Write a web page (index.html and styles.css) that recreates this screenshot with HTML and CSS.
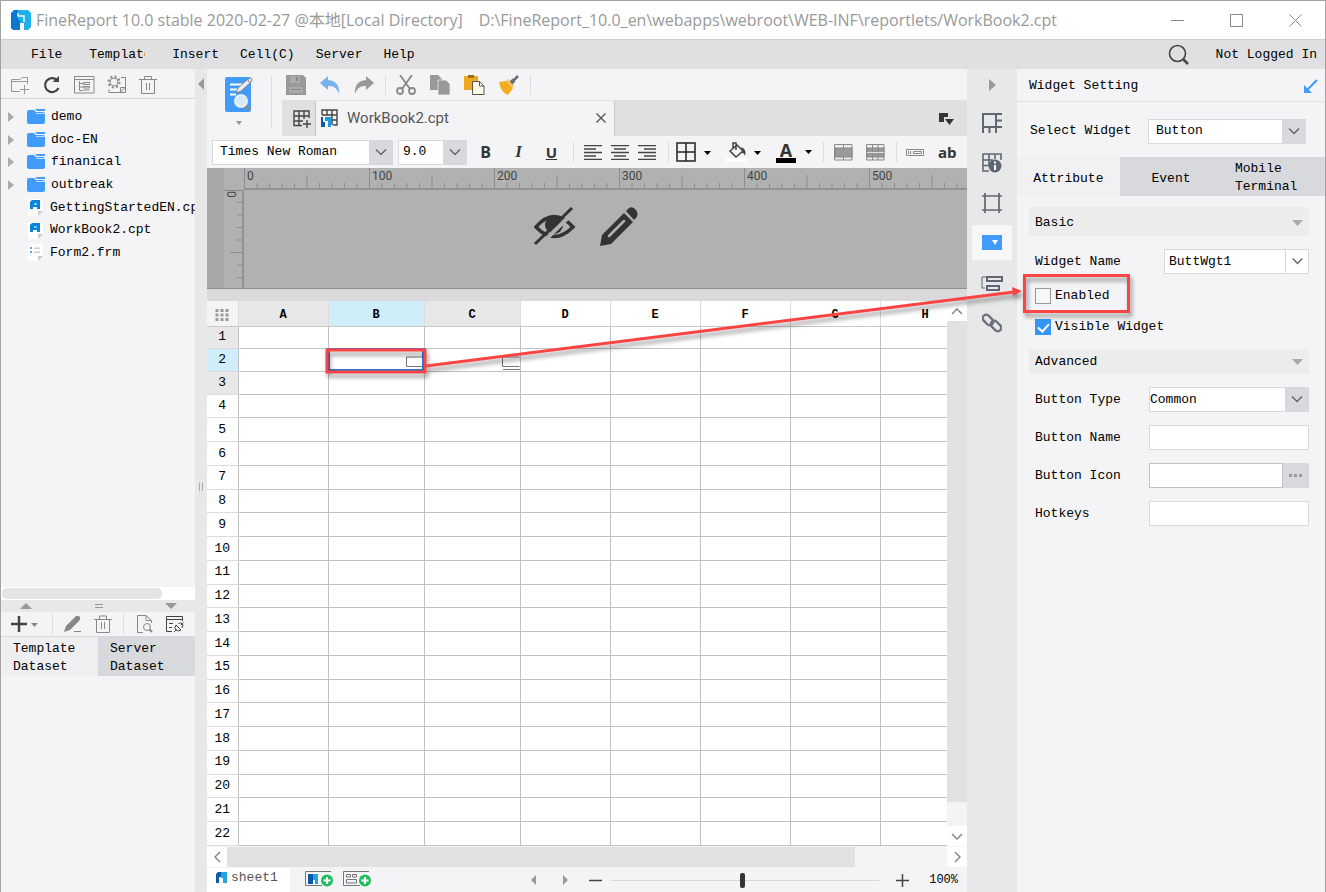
FILE: index.html
```html
<!DOCTYPE html>
<html lang="en">
<head>
<meta charset="utf-8">
<title>FineReport 10.0</title>
<link rel="stylesheet" href="styles.css">
</head>
<body>
<div class="window">
  <header class="titlebar">
    <svg class="logo" width="20" height="20" viewBox="0 0 20 20"><path d="M0 3L3 0H10V20H2L0 18Z" fill="#0a78d2"/><path d="M7 0H17L20 3V17L17 20H9V10H7Z" fill="#1fb0ea"/><path d="M7 3V6H13V12" fill="none" stroke="#e6f6fd" stroke-width="1.500"/><path d="M6 13H13V20H9V15H6Z" fill="#fff"/><path d="M2 13H9V20H2Z" fill="#0a78d2"/></svg>
    <span class="title">FineReport 10.0 stable 2020-02-27 @本地[Local Directory]</span>
    <span class="title path">D:\FineReport_10.0_en\webapps\webroot\WEB-INF\reportlets/WorkBook2.cpt</span>
    <div class="wincontrols">
      <button aria-label="Minimize"><svg width="13" height="13"><path d="M0 6.500H13" stroke="#888"/></svg></button>
      <button aria-label="Maximize"><svg width="13" height="13"><path d="M.5 .5H12.500V12.500H.5Z" fill="none" stroke="#888"/></svg></button>
      <button aria-label="Close"><svg width="13" height="13"><path d="M.5 .5L12.500 12.500M12.500 .5L.5 12.500" stroke="#888"/></svg></button>
    </div>
  </header>
  <nav class="menubar">
    <button class="wide">File</button><button class="wide clip">Template</button><button>Insert</button><button>Cell(C)</button><button>Server</button><button>Help</button>
    <span class="spacer"></span>
    <button class="search" aria-label="Search"><svg width="22" height="22" viewBox="0 0 22 22" fill="none" stroke="#444"><circle cx="9.500" cy="9.500" r="8" stroke-width="1.600"/><path d="M15 15L20 20" stroke-width="2.500"/></svg></button>
    <a href="#" class="login">Not Logged In</a>
  </nav>
  <main class="body">
    <aside class="left">
      <div class="tools files-tools">
        <button aria-label="New folder"><svg width="20" height="20" fill="none" stroke="#999"><path d="M10 16.500H1.500V4.500H10L12 2.500H17.500V9M2 6.500H17M14.500 10V19M10 14.500H19"/></svg></button>
        <button aria-label="Refresh"><svg width="20" height="20" fill="none" stroke="#444" stroke-width="2.200"><path d="M15 5A7 7 0 1 0 16.500 13"/><path d="M10.500 7H17V1Z" fill="#444" stroke="none"/></svg></button>
        <button aria-label="Structure"><svg width="21" height="20" fill="none" stroke="#888"><path d="M.5 1.500H20V18H.5ZM.5 4.500H20M5.500 6V15.500H9M5.500 8.500H9M5.500 12H9M9.500 7.500H15.500V9.500H9.500ZM9.500 11.500H15.500V13H9.500ZM9.500 15H15.500"/></svg></button>
        <button aria-label="Settings"><svg width="20" height="20" fill="none" stroke="#888"><circle cx="7" cy="7" r="4"/><circle cx="7" cy="7" r="5.500" stroke-dasharray="2 2.300" stroke-width="2"/><path d="M14 2.500H18.500V17.500H2V14.500M13.500 17V12.500H18M13.500 17L18 12.500"/></svg></button>
        <button aria-label="Delete"><svg width="18" height="20" fill="none" stroke="#888"><path d="M0 4.500H18M5.500 4V1.500H12.500V4M2.500 5V18.500H15.500V5M7.500 8V15M10.500 8V15"/></svg></button>
      </div>
      <ul class="tree">
        <li><i class="tri"></i><svg width="18" height="16"><path d="M0 3Q0 1 2 1H7L9 3H16Q18 3 18 5V13Q18 15 16 15H2Q0 15 0 13Z" fill="#409bfb"/><path d="M8 0H18V2H10Z" fill="#409bfb"/><path d="M9 4.500H18" stroke="#b8dcff"/></svg><span>demo</span></li>
        <li><i class="tri"></i><svg width="18" height="16"><path d="M0 3Q0 1 2 1H7L9 3H16Q18 3 18 5V13Q18 15 16 15H2Q0 15 0 13Z" fill="#409bfb"/><path d="M8 0H18V2H10Z" fill="#409bfb"/><path d="M9 4.500H18" stroke="#b8dcff"/></svg><span>doc-EN</span></li>
        <li><i class="tri"></i><svg width="18" height="16"><path d="M0 3Q0 1 2 1H7L9 3H16Q18 3 18 5V13Q18 15 16 15H2Q0 15 0 13Z" fill="#409bfb"/><path d="M8 0H18V2H10Z" fill="#409bfb"/><path d="M9 4.500H18" stroke="#b8dcff"/></svg><span>finanical</span></li>
        <li><i class="tri"></i><svg width="18" height="16"><path d="M0 3Q0 1 2 1H7L9 3H16Q18 3 18 5V13Q18 15 16 15H2Q0 15 0 13Z" fill="#409bfb"/><path d="M8 0H18V2H10Z" fill="#409bfb"/><path d="M9 4.500H18" stroke="#b8dcff"/></svg><span>outbreak</span></li>
        <li><i class="tri none"></i><svg width="17" height="17"><path d="M1 0H16V12L11 17H1Z" fill="#fff"/><path d="M11 12H16L11 17Z" fill="#ccc"/><path d="M3 3L5 1H13V10H10V8H6V10H3Z" fill="#0b83d6"/><path d="M7 4H10V6H7Z" fill="#5fd0f5"/></svg><span>GettingStartedEN.cpt</span></li>
        <li><i class="tri none"></i><svg width="17" height="17"><path d="M1 0H16V12L11 17H1Z" fill="#fff"/><path d="M11 12H16L11 17Z" fill="#ccc"/><path d="M3 3L5 1H13V10H10V8H6V10H3Z" fill="#0b83d6"/><path d="M7 4H10V6H7Z" fill="#5fd0f5"/></svg><span>WorkBook2.cpt</span></li>
        <li><i class="tri none"></i><svg width="17" height="17"><path d="M1 0H16V12L11 17H1Z" fill="#fff"/><path d="M11 12H16L11 17Z" fill="#ccc"/><path d="M3 3H5V5H3ZM3 7H5V9H3Z" fill="#5ba8e8"/><path d="M7 3.500H13V5H7ZM7 7.500H13V9H7Z" fill="#ccc"/></svg><span>Form2.frm</span></li>
      </ul>
      <div class="hscroll"><i></i></div>
      <div class="divider"><svg width="12" height="6"><path d="M6 0L12 6H0Z" fill="#999"/></svg><svg width="8" height="5"><path d="M0 .5H8M0 3.500H8" stroke="#999"/></svg><svg width="12" height="6"><path d="M0 0H12L6 6Z" fill="#999"/></svg></div>
      <div class="tools data-tools">
        <button aria-label="Add"><svg width="30" height="18"><path d="M9 1V17M1 9H17" stroke="#444" stroke-width="2.500"/><path d="M21 8H28L24.500 12Z" fill="#888"/></svg></button>
        <i class="sep"></i>
        <button aria-label="Edit"><svg width="18" height="18"><path d="M0 17L2 11L12 1Q14 0 16 2Q17 4 15 6L6 15Z" fill="#888"/><path d="M10 16.500H17" stroke="#888"/></svg></button>
        <button aria-label="Delete"><svg width="18" height="18" fill="none" stroke="#888"><path d="M0 4.500H18M5.500 4V1H12.500V4M2.500 5V17.500H15.500V5M7.500 7V14M10.500 7V14"/></svg></button>
        <i class="sep"></i>
        <button aria-label="Preview"><svg width="18" height="18" fill="none" stroke="#888"><path d="M7 17.500H1.500V.5H10L15.500 5.500V8M10 1V5.500H15"/><circle cx="11" cy="12" r="3.500"/><path d="M13.500 14.500L16 17" stroke-width="2"/></svg></button>
        <button aria-label="Connection"><svg width="20" height="18" fill="none" stroke="#444"><path d="M7 16.500H1.500V1.500H17.500V6M1.500 4.500H17.500M4 8.500H8M4 12.500H7"/><path d="M9 17L11.500 14.500M16 10L18.500 7.500M11 10L16 15Q13 17 11 15Q9 13 11 10M13.500 8.500Q16 7 17.500 9Q18.500 10.500 17 13"/></svg></button>
      </div>
      <div class="datatabs"><button class="on">Template<br>Dataset</button><button>Server<br>Dataset</button></div>
    </aside>
    <div class="gutter"><svg width="6" height="12"><path d="M6 0V12L0 6Z" fill="#999"/></svg><svg class="grip" width="5" height="8"><path d="M.5 0V8M3.500 0V8" stroke="#aaa"/></svg><i></i></div>
    <section class="center">
      <div class="top">
        <button class="preview" aria-label="Template preview"><svg width="30" height="52" viewBox="0 0 30 52"><rect x="1" y="1" width="26" height="35" rx="2" fill="#409bfb"/><path d="M6 8.500H18M6 13.500H15M6 18.500H12" stroke="#fff" stroke-width="2"/><path d="M12 17L14 12L24 3L27 6L17 15Z" fill="#eee" stroke="#888"/><circle cx="26" cy="4" r="2" fill="#eee" stroke="#888"/><path d="M21 29L26 34" stroke="#888" stroke-width="3"/><circle cx="17" cy="25" r="6" fill="#d4e9fc" stroke="#eee" stroke-width="2"/><path d="M12 45H18L15 49Z" fill="#999"/></svg></button>
        <div class="topmain">
          <div class="tools edit-tools">
            <button aria-label="Save"><svg width="20" height="20"><path d="M0 0H17L20 3V20H0Z" fill="#999"/><path d="M4 1H14V8H4ZM3 12H17V18H3Z" fill="#aaa"/><path d="M10 2H12V6H10ZM5 14H15V15H5Z" fill="#888"/></svg></button>
            <button aria-label="Undo"><svg width="20" height="20"><path d="M8 1L0 8L8 15V11Q16 10 19 19Q20 6 8 5Z" fill="#76b3f0"/></svg></button>
            <button aria-label="Redo"><svg width="20" height="20"><path d="M12 1L20 8L12 15V11Q4 10 1 19Q0 6 12 5Z" fill="#999"/></svg></button>
            <i class="sep"></i>
            <button aria-label="Cut"><svg width="20" height="20" fill="none" stroke="#888" stroke-width="1.800"><path d="M4 0L14 14M16 0L6 14"/><circle cx="4" cy="16" r="3"/><circle cx="16" cy="16" r="3"/></svg></button>
            <button aria-label="Copy"><svg width="20" height="20"><path d="M0 0H8L12 4V15H0Z" fill="#999"/><path d="M8 5H16L20 9V20H8Z" fill="#999" stroke="#f4f4f6" stroke-width=".7"/></svg></button>
            <button aria-label="Paste"><svg width="21" height="20"><path d="M0 1H14V15H0Z" fill="#efa920"/><path d="M4 0H10V3H4Z" fill="#9b6a28"/><path d="M8.500 6.500H15.500L20 11V19.500H8.500Z" fill="#fff8e6" stroke="#555"/><path d="M15.500 6.500V11H20" fill="none" stroke="#555"/></svg></button>
            <button aria-label="Format painter"><svg width="20" height="20"><path d="M0 7L7 6L14 13L9 20Q2 18 0 7Z" fill="#f2ac22"/><path d="M7 6L9 4L15 10L14 13Z" fill="#f7c35b"/><path d="M12 8L15 5" stroke="#666f7b" stroke-width="4"/><path d="M14 6L19 1" stroke="#666f7b" stroke-width="2.500"/></svg></button>
            <i class="sep"></i>
          </div>
          <div class="doctabs">
            <button class="newtab" aria-label="New workbook"><svg width="19" height="18" fill="none" stroke="#444" stroke-width="1.400"><path d="M9 15.500H1V1H16V8M1 6H16M1 11H10M6 1V15M11 1V9M14 10V18M10 14H18"/></svg></button>
            <div class="doctab"><svg width="18" height="18" fill="none" stroke="#444" stroke-width="1.400"><path d="M1 6V1H16V16H12M1 6H16M11 11H16M6 1V6M11 1V16"/><path d="M0 8H2V13H4V18H0Z" fill="#0a5aa8" stroke="none"/><path d="M4 8H10V18H7V12H4Z" fill="#1b9be0" stroke="none"/></svg><span>WorkBook2.cpt</span><button aria-label="Close tab"><svg width="10" height="10"><path d="M.5 .5L9.500 9.500M9.500 .5L.5 9.500" stroke="#555" stroke-width="1.400"/></svg></button></div>
            <button class="tablist" aria-label="Tab list"><svg width="16" height="12"><path d="M0 0H9V4H5V9H0Z" fill="#333"/><path d="M6 6H15L10.500 12Z" fill="#333"/></svg></button>
          </div>
        </div>
      </div>
      <div class="format">
        <div class="combo fontname"><select aria-label="Font"><option>Times New Roman</option></select><svg viewBox="0 0 24 24"><path d="M7 9.500L12 14.500L17 9.500"/></svg></div>
        <div class="combo fontsize"><select aria-label="Font size"><option>9.0</option></select><svg viewBox="0 0 24 24"><path d="M7 9.500L12 14.500L17 9.500"/></svg></div>
        <div class="biu"><button class="fb">B</button><button class="fb it">I</button><button class="fb u">U</button></div>
        <i class="sep"></i>
        <div class="aligns"><button aria-label="Align left"><svg width="18" height="15"><path d="M0 .5H18M0 4H12M0 7.500H18M0 11H12M0 14.500H18" stroke="#444" stroke-width="1.300"/></svg></button>
        <button aria-label="Align center"><svg width="18" height="15"><path d="M0 .5H18M3 4H15M0 7.500H18M3 11H15M0 14.500H18" stroke="#444" stroke-width="1.300"/></svg></button>
        <button aria-label="Align right"><svg width="18" height="15"><path d="M0 .5H18M6 4H18M0 7.500H18M6 11H18M0 14.500H18" stroke="#444" stroke-width="1.300"/></svg></button></div>
        <i class="sep"></i>
        <div class="paints">
        <button aria-label="Borders"><svg width="36" height="20"><path d="M1 1H19V19H1ZM10 1V19M1 10H19" fill="none" stroke="#222" stroke-width="1.500"/><path d="M28 9H35L31.500 13Z"/></svg></button>
        <button aria-label="Fill"><svg width="36" height="20"><path d="M0 16H20V20H0Z" fill="#fff"/><path d="M4 9L11 3L17 9L10 15ZM7 6V1H10V8" fill="none" stroke="#444" stroke-width="1.500"/><path d="M15 5Q21 7 19 14Q18 10 14 11L17 9Z" fill="#444"/><path d="M28 9H35L31.500 13Z"/></svg></button>
        <button class="color" aria-label="Font color"><span>A</span><svg width="8" height="5"><path d="M0 0H7L3.500 4Z"/></svg></button>
        </div>
        <i class="sep"></i>
        <div class="merges">
        <button aria-label="Merge cells"><svg width="19" height="17" stroke="#888"><path d="M.5 .5H18V16H.5Z" fill="#eee"/><path d="M1 4H18V13H1Z" fill="#999"/><path d="M9.500 0V4M9.500 13V16"/></svg></button>
        <button aria-label="Unmerge cells"><svg width="19" height="17" stroke="#888"><path d="M.5 .5H18V16H.5Z" fill="#eee"/><path d="M1 4H18V13H1Z" fill="#999"/><path d="M6.500 0V16M12 0V16"/><path d="M1 8.500H18" stroke="#ddd"/></svg></button>
        </div>
        <i class="sep"></i>
        <button aria-label="Text field"><svg width="18" height="7"><path d="M.5 .5H17.500V6.500H.5ZM2.500 2V5M4.500 2V5M7.500 2.500H15.500V4.500H7.500Z" fill="none" stroke="#888"/></svg></button>
        <button class="ab">ab</button>
      </div>
      <div class="canvas">
        <div class="corner"></div>
        <div class="ruler"><svg width="100%" height="22"><defs><pattern id="ticks" width="125" height="22" patternUnits="userSpaceOnUse"><path d="M.5 0V22M63 7V22M13 15V22M25.500 15V22M38 15V22M50.500 15V22M75.500 15V22M88 15V22M100.500 15V22M113 15V22" stroke="#8d8d8d"/></pattern></defs><rect width="100%" height="22" fill="url(#ticks)"/></svg><div class="labels"><span>0</span><span>100</span><span>200</span><span>300</span><span>400</span><span>500</span></div></div>
        <div class="vruler"><span>0</span><svg width="20" height="98"><path d="M13 11.500H20M13 24H20M13 36.500H20M13 49H20M6 61.500H20M13 74H20M13 86.500H20" stroke="#8d8d8d"/></svg></div>
        <div class="stage">
          <svg width="42" height="40" viewBox="0 0 42 40"><path d="M2 20Q20-1 39 20Q20 39 2 20Z" fill="none" stroke="#333" stroke-width="3.500"/><circle cx="20" cy="18" r="9" fill="#333"/><path d="M5 39L42 3" stroke="#b1b1b1" stroke-width="4"/><path d="M1 37L38 1" stroke="#333" stroke-width="3"/></svg>
          <svg width="40" height="40" viewBox="0 0 40 40"><path d="M1 39L3 28L25 6L34 15L12 37Z" fill="#333"/><path d="M27 4L30 1Q34-1 37 3Q40 7 37 11L35 13Z" fill="#333"/><path d="M10 29L25 14" stroke="#b1b1b1" stroke-width="2.500" stroke-linecap="round"/></svg>
        </div>
      </div>
      <div class="sheet">
        <div class="gridwrap">
        <table>
          <colgroup><col class="ch"><col class="cn"><col class="cw"><col class="cw"><col class="cn"><col class="cn"><col class="cn"><col class="cn"><col class="cn"></colgroup>
          <thead><tr><th class="all"><svg width="14" height="12"><path d="M2 0V12M7 0V12M12 0V12" stroke="#999" stroke-width="3" stroke-dasharray="3 1.500"/></svg></th><th class="near">A</th><th class="sel">B</th><th class="near">C</th><th>D</th><th>E</th><th>F</th><th>G</th><th>H</th></tr></thead>
          <tbody>
          <tr class="short"><th class="near">1</th><td></td><td></td><td></td><td></td><td></td><td></td><td></td><td></td></tr>
          <tr class="short"><th class="sel">2</th><td></td><td class="active"><svg width="18" height="15"><path d="M17.500 1H.5V10.500H17.500M1 13.500H18" fill="none" stroke="#777"/></svg></td><td class="widget"><svg width="18" height="15"><path d="M17.500 1H.5V10.500H17.500M1 13.500H18" fill="none" stroke="#777"/></svg></td><td></td><td></td><td></td><td></td><td></td></tr>
          <tr class="short"><th class="near">3</th><td></td><td></td><td></td><td></td><td></td><td></td><td></td><td></td></tr>
          <tr><th>4</th><td></td><td></td><td></td><td></td><td></td><td></td><td></td><td></td></tr>
          <tr><th>5</th><td></td><td></td><td></td><td></td><td></td><td></td><td></td><td></td></tr>
          <tr><th>6</th><td></td><td></td><td></td><td></td><td></td><td></td><td></td><td></td></tr>
          <tr><th>7</th><td></td><td></td><td></td><td></td><td></td><td></td><td></td><td></td></tr>
          <tr><th>8</th><td></td><td></td><td></td><td></td><td></td><td></td><td></td><td></td></tr>
          <tr><th>9</th><td></td><td></td><td></td><td></td><td></td><td></td><td></td><td></td></tr>
          <tr><th>10</th><td></td><td></td><td></td><td></td><td></td><td></td><td></td><td></td></tr>
          <tr><th>11</th><td></td><td></td><td></td><td></td><td></td><td></td><td></td><td></td></tr>
          <tr><th>12</th><td></td><td></td><td></td><td></td><td></td><td></td><td></td><td></td></tr>
          <tr><th>13</th><td></td><td></td><td></td><td></td><td></td><td></td><td></td><td></td></tr>
          <tr><th>14</th><td></td><td></td><td></td><td></td><td></td><td></td><td></td><td></td></tr>
          <tr><th>15</th><td></td><td></td><td></td><td></td><td></td><td></td><td></td><td></td></tr>
          <tr><th>16</th><td></td><td></td><td></td><td></td><td></td><td></td><td></td><td></td></tr>
          <tr><th>17</th><td></td><td></td><td></td><td></td><td></td><td></td><td></td><td></td></tr>
          <tr><th>18</th><td></td><td></td><td></td><td></td><td></td><td></td><td></td><td></td></tr>
          <tr><th>19</th><td></td><td></td><td></td><td></td><td></td><td></td><td></td><td></td></tr>
          <tr><th>20</th><td></td><td></td><td></td><td></td><td></td><td></td><td></td><td></td></tr>
          <tr><th>21</th><td></td><td></td><td></td><td></td><td></td><td></td><td></td><td></td></tr>
          <tr><th>22</th><td></td><td></td><td></td><td></td><td></td><td></td><td></td><td></td></tr>
          </tbody>
        </table>
        </div>
        <div class="vbar"><button aria-label="Scroll up"><svg width="12" height="7"><path d="M1 6L6 1L11 6"/></svg></button><i></i><button aria-label="Scroll down"><svg width="12" height="7"><path d="M1 1L6 6L11 1"/></svg></button></div>
      </div>
      <div class="hbar"><button aria-label="Scroll left"><svg width="7" height="12"><path d="M6 1L1 6L6 11"/></svg></button><i></i><button aria-label="Scroll right"><svg width="7" height="12"><path d="M1 1L6 6L1 11"/></svg></button></div>
      <footer class="status">
        <button class="sheettab"><svg width="11" height="12"><path d="M0 2L2 0H5V5H3V11H0Z" fill="#0a5aa8"/><path d="M5 0H11V11H7V6H5Z" fill="#24a3e0"/></svg>sheet1</button>
        <button class="addsheet" aria-label="Add report sheet"><svg width="28" height="16"><path d="M26 .5H.5V14.500H17" fill="none" stroke="#777"/><path d="M3 3H8V13H3Z" fill="#0a5aa8"/><path d="M8 3H13V13H10V9H8Z" fill="#24a3e0"/><circle cx="22" cy="9.500" r="6" fill="#1fbf5c"/><path d="M22 6V13M18.500 9.500H25.500" stroke="#fff" stroke-width="2"/></svg></button>
        <button class="addsheet" aria-label="Add form sheet"><svg width="28" height="16"><path d="M26 .5H.5V14.500H17M3.500 3.500H7.500V6H3.500ZM9.500 3.500H13.500V6H9.500ZM3.500 8.500H13.500V12H3.500Z" fill="none" stroke="#777"/><circle cx="22" cy="9.500" r="6" fill="#1fbf5c"/><path d="M22 6V13M18.500 9.500H25.500" stroke="#fff" stroke-width="2"/></svg></button>
        <span class="spacer"></span>
        <button aria-label="Previous sheet"><svg width="6" height="10"><path d="M5 0V10L0 5Z" fill="#999"/></svg></button>
        <button class="nextsheet" aria-label="Next sheet"><svg width="6" height="10"><path d="M1 0V10L6 5Z" fill="#999"/></svg></button>
        <button aria-label="Zoom out"><svg width="13" height="13"><path d="M0 6.500H13" stroke="#444" stroke-width="1.500"/></svg></button>
        <input type="range" aria-label="Zoom" min="0" max="100" value="49">
        <button aria-label="Zoom in"><svg width="13" height="13"><path d="M0 6.500H13M6.500 0V13" stroke="#444" stroke-width="1.500"/></svg></button>
        <span class="zoom">100%</span>
      </footer>
    </section>
    <nav class="rail">
      <button class="collapse" aria-label="Collapse"><svg width="7" height="12"><path d="M0 0V12L7 6Z" fill="#999"/></svg></button>
      <button aria-label="Cell element"><svg width="20" height="20" fill="none" stroke="#5f6673" stroke-width="2"><path d="M1 20V1H20M1 14H14V1M14 7.500H20M14 14H20M7.500 14V20M14 14V20"/></svg></button>
      <button aria-label="Cell attributes"><svg width="20" height="20" fill="none" stroke="#5f6673" stroke-width="1.600"><path d="M7 18H1V1H19V7M1 7H11M1 12.500H7M7 1V12M13 1V6"/><circle cx="13" cy="13" r="6.500" fill="#5f6673" stroke="none"/><path d="M13 8.500V10.500M13 12V17" stroke="#fff" stroke-width="2"/></svg></button>
      <button aria-label="Float element"><svg width="20" height="20" fill="none" stroke="#5f6673" stroke-width="1.700"><path d="M3 0V20M17 0V20M0 3H20M0 17H20"/></svg></button>
      <button class="on" aria-label="Widget setting"><svg width="20" height="15"><rect width="20" height="15" fill="#409bfb"/><path d="M10 5H16L13 10Z" fill="#fff"/></svg></button>
      <button aria-label="Conditions"><svg width="22" height="16" fill="none" stroke="#5f6673"><path d="M5 2H1V13H4"/><path d="M6 2H21V6H6ZM6 11H18V15H6Z" stroke-width="2"/></svg></button>
      <button aria-label="Hyperlink"><svg width="20" height="20" fill="none" stroke="#6b717d" stroke-width="2.400"><rect x="0" y="3.500" width="12" height="7" rx="3.500" transform="rotate(45 6 7)"/><rect x="8" y="9.500" width="12" height="7" rx="3.500" transform="rotate(45 14 13)"/></svg></button>
    </nav>
    <aside class="right">
      <div class="righthead"><span>Widget Setting</span><button aria-label="Dock"><svg width="15" height="15"><path d="M14 1L4 11" stroke="#409bfb" stroke-width="2.200"/><path d="M1 6V14H9Z" fill="#409bfb"/></svg></button></div>
      <div class="selectrow"><label for="wsel">Select Widget</label><div class="combo"><select id="wsel"><option>Button</option></select><svg viewBox="0 0 24 24"><path d="M7 9.500L12 14.500L17 9.500"/></svg></div></div>
      <div class="proptabs"><button class="on">Attribute</button><button>Event</button><button class="two"><span>Mobile<br>Terminal</span></button></div>
      <div class="props">
        <button class="section basic">Basic<svg width="11" height="6"><path d="M0 0H11L5.500 6Z" fill="#aaa"/></svg></button>
        <div class="field narrow"><label for="wname">Widget Name</label><div class="combo plain"><select id="wname"><option>ButtWgt1</option></select><svg viewBox="0 0 24 24"><path d="M7 9.500L12 14.500L17 9.500"/></svg></div></div>
        <label class="check"><input type="checkbox">Enabled</label>
        <label class="check"><input type="checkbox" checked>Visible Widget</label>
        <button class="section">Advanced<svg width="11" height="6"><path d="M0 0H11L5.500 6Z" fill="#aaa"/></svg></button>
        <div class="fields">
          <div class="field"><label for="btype">Button Type</label><div class="combo flush"><select id="btype"><option>Common</option></select><svg viewBox="0 0 24 24"><path d="M7 9.500L12 14.500L17 9.500"/></svg></div></div>
          <div class="field"><label for="bname">Button Name</label><input id="bname" type="text"></div>
          <div class="field"><label for="bicon">Button Icon</label><div class="browse"><input id="bicon" type="text"><button aria-label="Browse"><svg width="14" height="3"><path d="M0 0H3V3H0ZM5 0H8V3H5ZM10 0H13V3H10Z" fill="#999"/></svg></button></div></div>
          <div class="field"><label for="hot">Hotkeys</label><input id="hot" type="text"></div>
        </div>
      </div>
    </aside>
  </main>
  <svg class="callout"><g fill="none" stroke="#fb4444"><rect x="327" y="350" width="98" height="22" stroke-width="3"/><rect x="1024.500" y="275.500" width="104" height="36" stroke-width="3"/><path d="M426 366L1014 292" stroke-width="3"/></g><path d="M1022 291L1013 296L1012 287Z" fill="#fb4444"/></svg>
</div>
</body>
</html>
```
FILE: styles.css
```css
* { box-sizing: border-box; }
body { margin: 0; font: 13px/18px "Liberation Mono", "Noto Sans CJK SC", monospace; color: #000; }
button, input, select { font: inherit; color: inherit; margin: 0; }
button { border: 0; padding: 0; background: none; }
svg { display: block; flex: none; }
a { color: inherit; text-decoration: none; }
.window { position: relative; display: flex; flex-direction: column; min-height: 100vh; border: 1px solid #a3a3a3; background: #f4f4f6; overflow: hidden; }
.spacer { flex: 1; }
.sep { width: 1px; height: 20px; background: #dcdcdf; flex: none; }

.titlebar { display: flex; align-items: center; height: 38px; background: #fff; padding-left: 10px; }
.title { font: 16px/24px "Open Sans", "Noto Sans CJK SC", sans-serif; color: #999; margin-left: 5px; white-space: nowrap; }
.title.path { margin-left: 16px; }
.wincontrols { display: flex; gap: 46px; margin-left: auto; padding-right: 23px; }

.menubar { display: flex; align-items: center; gap: 20px; height: 30px; background: #e0e0e2; border-top: 1px solid #d0d0d2; padding: 0 8px 0 30px; }
.menubar button + button { margin-left: 1px; }
.menubar .wide { margin-right: 6px; }
.menubar .clip { width: 56px; overflow: hidden; }
.menubar .search { margin-right: 6px; }

.body { flex: 1; display: flex; }
.tools { display: flex; align-items: center; }
.left { width: 194px; display: flex; flex-direction: column; overflow: hidden; }
.files-tools { height: 30px; padding: 2px 0 0 9px; gap: 12px; border-bottom: 1px solid #d8d8da; }
.tree { list-style: none; margin: 0; padding: 7px 0 0 7px; height: 165px; display: grid; grid-template-rows: repeat(7, 1fr); }
.tree li { display: flex; align-items: center; white-space: nowrap; }
.tree svg { margin-right: 6px; }
.tri { border-left: 6px solid #aaa; border-top: 5px solid transparent; border-bottom: 5px solid transparent; margin-right: 13px; }
.tri.none { border-left-color: transparent; }
.hscroll { margin-top: auto; height: 13px; background: #fff; padding: 1px; }
.hscroll i { display: block; width: 160px; height: 11px; border-radius: 5px; background: #e4e4e4; }
.divider { height: 12px; background: #e8e8e9; display: flex; justify-content: space-between; align-items: center; padding: 0 18px 0 19px; }
.data-tools { height: 25px; padding: 0 10px 0 9px; justify-content: space-between; border-bottom: 1px solid #d8d8da; }
.datatabs { display: grid; grid-template-columns: 1fr 1fr; height: 38px; margin-bottom: 217px; }
.datatabs button { text-align: left; padding: 3px 0 0 12px; background: #d8d9dd; }
.datatabs .on { background: #efeff1; }

.gutter { width: 12px; background: #e8e8e8; display: flex; flex-direction: column; align-items: center; justify-content: space-between; padding: 9px 0; }

.center { flex: 1; min-width: 0; display: flex; flex-direction: column; }
.top { display: flex; }
.preview { width: 65px; height: 52px; margin: 7px 10px 0 0; padding-left: 17px; border-right: 1px solid #dcdcdf; }
.topmain { flex: 1; }
.edit-tools { height: 31px; padding-left: 4px; gap: 14px; }
.edit-tools .sep { margin-left: -3px; margin-right: -4px; }
.doctabs { display: flex; height: 36px; background: #e0e0e2; border-top: 1px solid #e2e2e4; }
.newtab { width: 34px; padding-left: 11px; border-right: 1px solid #c6c6c8; }
.doctab { width: 299px; background: #f4f4f6; border-right: 1px solid #c6c6c8; display: flex; align-items: center; gap: 8px; padding: 0 8px 2px 5px; font: 15px/20px Roboto, sans-serif; color: #555; }
.doctab button { margin-left: auto; }
.tablist { margin: 0 12px 0 auto; }

.format { display: flex; align-items: center; height: 32px; padding: 0 10px 0 5px; }
.combo { position: relative; display: flex; height: 25px; }
.combo select { appearance: none; flex: 1; min-width: 0; border: 1px solid #d8d9dd; border-right: 24px solid #d8d9dd; border-radius: 0; background: #fff; padding: 0 0 0 7px; }
.combo svg { position: absolute; right: 0; top: 0; width: 24px; height: 24px; fill: none; stroke: #666; stroke-width: 1.500; pointer-events: none; }
.combo.plain select { border-right-width: 1px; padding-left: 4px; }
.combo.plain svg { border-left: 1px solid #d8d9dd; }
.combo.flush select { padding-left: 0; }
.fontname { width: 181px; }
.fontsize { width: 69px; margin-left: 5px; }
.fontsize select { padding-left: 4px; }
.biu { display: grid; grid-template-columns: 33px 33px 33px; justify-items: center; margin: 0 5px 0 2px; }
.fb { font: bold 16px/20px "Open Sans", sans-serif; color: #333; }
.it { font: italic bold 17px/20px "Liberation Serif", serif; }
.u { font-size: 15px; text-decoration: underline; }
.aligns { display: flex; gap: 9px; margin: 0 12px 0 10px; }
.paints { display: flex; gap: 14px; margin: 0 10px 0 7px; }
.color { display: flex; align-items: center; gap: 9px; }
.color span { font: bold 18px/16px "Open Sans", sans-serif; color: #333; border-bottom: 5px solid #000; width: 20px; }
.merges { display: flex; gap: 13px; margin: 0 11px 0 10px; }
.merges + .sep { margin-right: 9px; }
.ab { font: bold 15px/20px "Open Sans", sans-serif; color: #333; margin-left: 14px; }

.canvas { display: grid; grid-template-columns: 17px 20px 1fr; grid-template-rows: 22px 98px; background: #b1b1b1; border-bottom: 1px solid #909090; }
.corner { grid-row: 1 / 3; background: #a8a8a8; }
.ruler { grid-column: 3; position: relative; border-bottom: 2px solid #929292; overflow: hidden; }
.labels { position: absolute; left: 0; top: 0; display: flex; font: 12px/16px Roboto, sans-serif; color: #444; }
.labels span { width: 125px; padding-left: 3px; flex: none; }
.vruler { grid-column: 2; grid-row: 2; position: relative; border-right: 2px solid #929292; border-top: 1px solid #888; }
.vruler span { position: absolute; left: 0; top: 0; font: 12px/14px Roboto, sans-serif; writing-mode: vertical-rl; color: #444; }
.stage { grid-column: 3; display: flex; justify-content: center; gap: 23px; padding: 17px 38px 0 0; }

.sheet { flex: 1; display: flex; background: #f4f4f6; border-top: 12px solid #dadadc; }
.gridwrap { flex: 1; min-width: 0; overflow: hidden; background: #fff; }
table { table-layout: fixed; width: 763px; height: 545px; border-collapse: collapse; }
.ch { width: 31px; } .cn { width: 90px; } .cw { width: 96px; }
th { font-weight: normal; padding: 0; border: 1px solid #dcdcdc; border-top: 0; border-left: 0; border-right-color: #c2c2c2; line-height: 16px; }
thead th { font-weight: bold; height: 25px; border-bottom-color: #c8c8c8; border-right-color: #dcdcdc; padding-top: 3px; font-size: 12px; }
.all { background: #f4f4f6; } .all svg { margin: auto; }
.near { background: #e8e8e8; } .sel { background: #cfeefa; }
td { border: 1px solid #c2c2c2; padding: 0; height: 23px; }
.short td { height: 22px; }
.active, .widget { vertical-align: bottom; }
.active svg, .widget svg { margin-left: auto; }
.active { outline: 3px solid #2f74d0; outline-offset: -2px; }
.vbar { width: 20px; display: flex; flex-direction: column; }
.vbar button { height: 20px; background: #fff; }
.vbar i { height: 481px; background: #e1e1e1; margin-bottom: auto; }
.vbar svg, .hbar svg { margin: auto; fill: none; stroke: #888; stroke-width: 1.500; }
.hbar { display: flex; height: 22px; padding: 1px 0; }
.hbar button { width: 20px; background: #fff; }
.hbar i { width: 628px; background: #e1e1e1; margin-right: auto; }

.status { display: flex; align-items: center; height: 24px; padding-right: 9px; }
.sheettab { display: flex; align-items: center; gap: 4px; width: 83px; height: 24px; padding: 0 0 4px 9px; background: #fff; color: #555; margin-right: 15px; }
.addsheet { margin-right: 10px; padding-bottom: 3px; }
.nextsheet { margin: 0 21px 0 25px; }
.status input { appearance: none; width: 268px; height: 16px; margin: 0 17px 0 9px; background: linear-gradient(#d8d8da, #d8d8da) center / 100% 1px no-repeat; }
.status input::-webkit-slider-thumb { appearance: none; width: 5px; height: 15px; border-radius: 2px; background: #333; }
.zoom { margin-left: 20px; font-size: 12px; }

.rail { width: 50px; background: #e8e8e8; display: flex; flex-direction: column; align-items: center; padding-top: 6px; gap: 5px; }
.rail button { width: 40px; height: 35px; display: grid; place-items: center; }
.rail .collapse { height: 19px; margin-bottom: 6px; }
.rail .on { background: #f7f7f9; }

.right { width: 308px; }
.righthead { display: flex; justify-content: space-between; align-items: center; height: 33px; border-bottom: 1px solid #e0e0e2; padding: 2px 7px 0 12px; }
.selectrow { display: flex; align-items: center; justify-content: space-between; height: 55px; padding: 3px 19px 0 13px; }
.selectrow .combo { width: 158px; }
.proptabs { display: grid; grid-template-columns: 1fr 1fr 1fr; height: 37px; }
.proptabs button { background: #d8d9dd; padding-top: 5px; }
.proptabs .on { background: #f1f1f3; }
.proptabs .two { padding: 3px 15px 0 0; }
.two span { display: inline-block; text-align: left; }
.props { padding: 13px 16px 0 12px; }
.section { display: flex; justify-content: space-between; align-items: center; width: 100%; height: 25px; padding: 0 6px; background: #ececec; }
.basic { height: 29px; padding-top: 2px; margin-bottom: 13px; }
.field { display: flex; align-items: center; justify-content: space-between; padding-left: 6px; height: 25px; }
.field > input, .field > div { width: 160px; }
.narrow > .combo { width: 145px; }
input[type="text"] { height: 25px; min-width: 0; border: 1px solid #d8d9dd; background: #fff; }
.browse { display: flex; }
.browse input { flex: 1; border-color: #c2c2c4; }
.browse button { width: 26px; background: #d8d9dd; display: grid; place-items: center; }
.check { display: flex; align-items: center; gap: 4px; height: 31px; padding-left: 6px; }
.narrow + .check { margin-top: 6px; }
.check + .section { margin-top: 7px; }
.check input { appearance: none; width: 16px; height: 16px; border: 1px solid #999; background: #f7f7f9; }
.check input:checked { background: #3597f5; border-color: #3597f5; display: grid; place-items: center; }
.check input:checked::after { content: ""; width: 5px; height: 9px; border: solid #fff; border-width: 0 2px 2px 0; transform: rotate(42deg); }
.fields { display: grid; gap: 13px; padding-top: 13px; }

.callout { position: absolute; left: -1px; top: -1px; width: 100%; height: 100%; overflow: visible; pointer-events: none; filter: drop-shadow(2px 4px 2px rgba(0, 0, 0, .4)); }
```
